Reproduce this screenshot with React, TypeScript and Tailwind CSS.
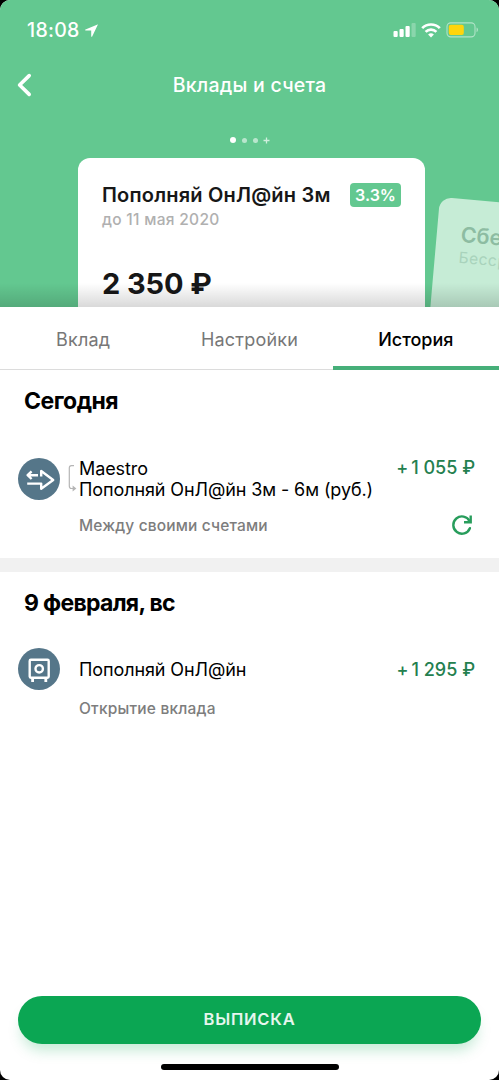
import type { ReactNode } from "react";

const tabs = ["Вклад", "Настройки", "История"];
const activeTab = "История";

function StatusBar() {
    return (
        <div className="flex h-[60px] items-center justify-between pr-[20px] pl-[27px] text-white">
            <div className="flex items-center gap-[5px] pt-px">
                <span className="text-[19.5px] font-medium tracking-[0.3px]">18:08</span>
                <svg width="13" height="13" viewBox="0 0 13 13" fill="currentColor">
                    <path d="M12.6.4.5 5.6c-.6.3-.5.9.1.9h5.6v5.7c0 .7.7.8 1 .2L12.8.8c.1-.3 0-.5-.2-.4Z" />
                </svg>
            </div>
            <div className="flex items-center">
                <svg width="23" height="14" viewBox="0 0 23 14" fill="currentColor">
                    <rect x="0.5" y="8" width="4.2" height="6" rx="1" />
                    <rect x="6.5" y="6" width="4.2" height="8" rx="1" />
                    <rect x="12.5" y="3" width="4.2" height="11" rx="1" />
                    <rect x="18.5" y="0" width="4.2" height="14" rx="1" opacity="0.25" />
                </svg>
                <svg
                    className="ml-[5px]"
                    width="20"
                    height="15"
                    viewBox="0 0 20 15"
                    fill="none"
                    stroke="currentColor"
                    strokeWidth="2.7"
                >
                    <path d="M1.2 5.1a12.5 12.5 0 0 1 17.6 0" />
                    <path d="M4.6 8.9a7.7 7.7 0 0 1 10.8 0" />
                    <path d="M10 14.5 7.1 11.6a4.2 4.2 0 0 1 5.8 0Z" fill="currentColor" stroke="none" />
                </svg>
                <svg className="ml-[5px]" width="33" height="16" viewBox="0 0 33 16">
                    <rect
                        x="1"
                        y="0.9"
                        width="28"
                        height="14"
                        rx="3.8"
                        fill="none"
                        stroke="white"
                        strokeOpacity="0.5"
                        strokeWidth="1.1"
                    />
                    <rect x="2.8" y="2.7" width="15" height="10.4" rx="2" fill="#fed50c" />
                    <path d="M30.6 5.6c1.7.6 1.7 4 0 4.6Z" fill="white" fillOpacity="0.55" />
                </svg>
            </div>
        </div>
    );
}

function Pager() {
    return (
        <div className="mt-[27px] flex h-[8px] items-center pl-[230px]">
            <span className="size-[6px] rounded-full bg-white" />
            <span className="ml-[6px] size-[5px] rounded-full bg-white/55" />
            <span className="ml-[6px] size-[5px] rounded-full bg-white/55" />
            <svg className="ml-[5px]" width="7" height="7" viewBox="0 0 7 7" stroke="white" strokeOpacity="0.7">
                <path d="M3.5.5v6M.5 3.5h6" strokeWidth="1.3" />
            </svg>
        </div>
    );
}

function DepositHeader() {
    return (
        <header className="relative h-[307px] shrink-0 overflow-hidden bg-[#63c890]">
            <StatusBar />
            <div className="grid h-[49px] grid-cols-[60px_1fr_60px] items-center text-white">
                <button aria-label="Назад" className="pl-[17px]">
                    <svg
                        width="15"
                        height="24"
                        viewBox="0 0 15 24"
                        fill="none"
                        stroke="currentColor"
                        strokeWidth="3.6"
                        strokeLinecap="round"
                        strokeLinejoin="round"
                    >
                        <path d="M12.2 2.6 2.6 12l9.6 9.4" />
                    </svg>
                </button>
                <h1 className="pt-[2px] text-center text-[19.5px] font-medium tracking-[0.25px] whitespace-nowrap">
                    Вклады и счета
                </h1>
            </div>
            <Pager />

            <div className="mt-[14px] ml-[78px] h-[220px] w-[347px] rounded-[12px] bg-white px-[24px] pt-[23px]">
                <div className="flex items-center justify-between">
                    <h2 className="text-[20px] leading-[28px] font-semibold tracking-[0.2px] whitespace-nowrap text-[#171717]">
                        Пополняй ОнЛ@йн 3м
                    </h2>
                    <span className="flex h-[24px] w-[51px] items-center justify-center rounded-[4px] bg-[#63c890] text-[16px] font-semibold text-white">
                        3.3%
                    </span>
                </div>
                <p className="text-[15.5px] leading-[21px] font-medium tracking-[0.3px] text-[#b0b0b0]">
                    до 11 мая 2020
                </p>
                <p className="mt-[34px] text-[29px] leading-[40px] font-bold tracking-[-0.1px] text-[#171717]">
                    2 350 ₽
                </p>
            </div>

            {/* next card peeking in from the right */}
            <div className="absolute top-[197px] left-[440px] h-[200px] w-[300px] origin-top-left rotate-[5deg] rounded-[12px] bg-[#c6ecd6] pt-[22px] pl-[24px]">
                <p className="text-[21.5px] leading-[26px] font-semibold text-[#8dbca2]">Сбер</p>
                <p className="text-[15.5px] leading-[22px] tracking-[0.5px] text-[#a9d3bc]">Бесср</p>
            </div>

            <div className="absolute inset-x-0 bottom-0 h-[24px] bg-gradient-to-b from-black/0 to-black/15" />
        </header>
    );
}

function Tabs() {
    return (
        <nav className="grid h-[63px] shrink-0 grid-cols-3 border-b border-[#dcdcdc] text-[18px] tracking-[0.2px]">
            {tabs.map((tab) => (
                <button
                    key={tab}
                    className={
                        tab === activeTab
                            ? "-mb-px border-b-[4px] border-[#46af79] pt-[6px] font-medium tracking-[0px] text-black"
                            : "pt-[2px] text-[#777777]"
                    }
                >
                    {tab}
                </button>
            ))}
        </nav>
    );
}

function OperationIcon({ children }: { children: ReactNode }) {
    return (
        <span className="flex size-[42px] shrink-0 items-center justify-center rounded-full bg-[#557689]">
            <svg width="42" height="42" viewBox="0 0 42 42" fill="none" stroke="white" strokeLinejoin="round">
                {children}
            </svg>
        </span>
    );
}

function Amount({ value }: { value: string }) {
    return (
        <span className="flex gap-[3px] text-[18px] leading-[21px] font-medium whitespace-nowrap text-[#24804f]">
            <span>+</span>
            <span>{value} ₽</span>
        </span>
    );
}

export default function App() {
    return (
        <div className="w-[499px] bg-black">
            <main className="flex h-[1080px] flex-col overflow-hidden rounded-[10px] bg-white font-['Inter','Noto_Sans',sans-serif] text-black">
                <DepositHeader />
                <Tabs />

                <section className="h-[188px] shrink-0 pt-[16px]">
                    <h3 className="pl-[24px] text-[23px] leading-[30px] font-bold tracking-[-0.5px]">
                        Сегодня
                    </h3>
                    <div className="mt-[42px] flex pr-[24px] pl-[18px]">
                        <OperationIcon>
                            <path d="M9.6 17.2h10.4M13.6 13.4 9.6 17.2l4 3.8" strokeWidth="2.4" />
                            <path d="M9.2 25.6h14v5.2L35.2 22 23.2 13v5.6" strokeWidth="2.4" />
                        </OperationIcon>
                        <svg
                            className="mt-[7px] ml-[8px] shrink-0"
                            width="11"
                            height="28"
                            viewBox="0 0 11 28"
                            fill="none"
                            stroke="#b5b5b5"
                            strokeWidth="1.2"
                        >
                            <path d="M6 .7H3.5Q1.3.7 1.3 3v18q0 2.5 2.2 2.5H6" />
                            <path d="M4.6 20.5 8.4 23.5l-3.8 3Z" fill="#b5b5b5" stroke="none" />
                        </svg>
                        <div className="flex-1 text-[18px] leading-[21px] tracking-[-0.1px] whitespace-nowrap">
                            <p>Maestro</p>
                            <p>Пополняй ОнЛ@йн 3м - 6м (руб.)</p>
                            <p className="mt-[15px] text-[15.5px] font-medium tracking-[0.15px] text-[#7d7d7d]">
                                Между своими счетами
                            </p>
                        </div>
                        <div className="-mt-px flex flex-col items-end">
                            <Amount value="1 055" />
                            <svg
                                className="mt-[36px] mr-[2px]"
                                width="22"
                                height="22"
                                viewBox="0 0 22 22"
                                fill="none"
                                stroke="#289d5c"
                                strokeWidth="2.4"
                            >
                                <path d="M18.9 14.2A8.6 8.6 0 1 1 18.6 7.2" strokeLinecap="round" />
                                <path d="M19.7 1.5v6.7h-6.7" />
                            </svg>
                        </div>
                    </div>
                </section>

                <div className="h-[14px] shrink-0 bg-[#f1f1f1]" />

                <section className="flex-1 pt-[16px]">
                    <h3 className="pl-[24px] text-[23px] leading-[30px] font-bold tracking-[-0.7px]">
                        9 февраля, вс
                    </h3>
                    <div className="mt-[30px] flex pr-[24px] pl-[18px]">
                        <OperationIcon>
                            <rect x="11.7" y="11.7" width="19" height="18" rx="1.2" strokeWidth="2.4" />
                            <circle cx="21.2" cy="20.8" r="3.7" strokeWidth="2.4" />
                            <path d="M14.6 31v3M27.8 31v3" strokeWidth="2.8" />
                        </OperationIcon>
                        <div className="ml-[19px] flex-1 pt-[11px] text-[18px] leading-[21px] tracking-[-0.1px] whitespace-nowrap">
                            <p>Пополняй ОнЛ@йн</p>
                            <p className="mt-[18px] text-[15.5px] font-medium tracking-[0.2px] text-[#7d7d7d]">
                                Открытие вклада
                            </p>
                        </div>
                        <div className="pt-[11px]">
                            <Amount value="1 295" />
                        </div>
                    </div>
                </section>

                <footer className="flex shrink-0 flex-col items-center pb-[10px]">
                    <button className="h-[48px] w-[463px] rounded-full bg-[#0ba653] pb-px text-[16.5px] font-semibold tracking-[0.8px] text-white/90 shadow-[0_10px_14px_-4px_rgba(11,166,83,0.25)]">
                        ВЫПИСКА
                    </button>
                    <div className="mt-[20px] h-[6px] w-[178px] rounded-full bg-black" />
                </footer>
            </main>
        </div>
    );
}
